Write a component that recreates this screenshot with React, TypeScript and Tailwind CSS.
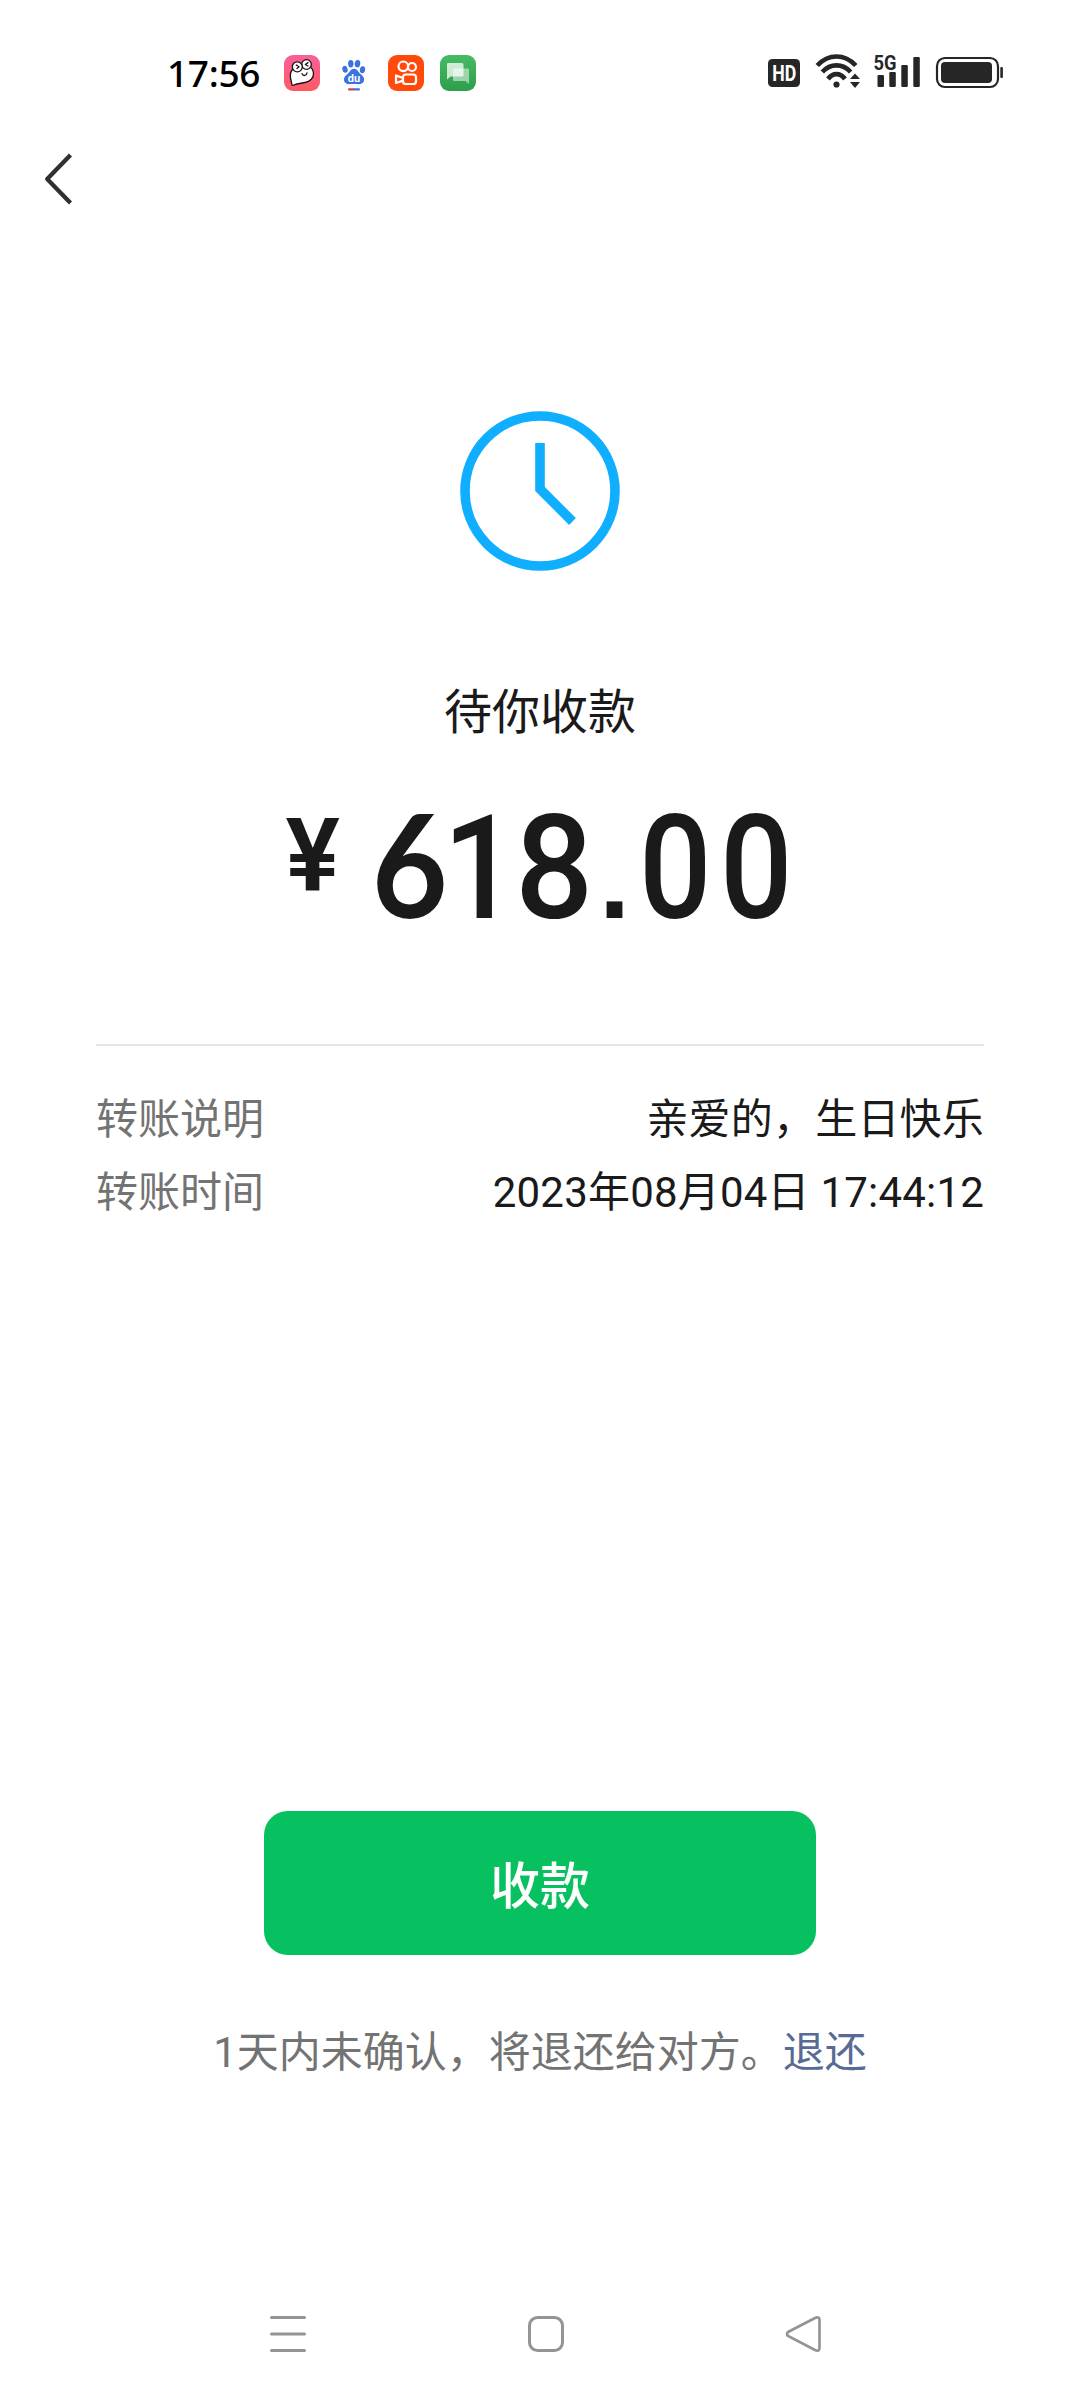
import { ReactNode } from "react";

interface IDetail {
  label: string;
  value: string;
}

const details: IDetail[] = [
  { label: "转账说明", value: "亲爱的，生日快乐" },
  { label: "转账时间", value: "2023年08月04日 17:44:12" },
];

function AppIcons() {
  return (
    <div className="flex gap-4">
      <svg width="36" height="36" viewBox="0 0 36 36">
        <defs>
          <linearGradient id="pink" x1="0" y1="0" x2="0" y2="1">
            <stop offset="0" stopColor="#f8609c" />
            <stop offset="1" stopColor="#ff5a62" />
          </linearGradient>
        </defs>
        <rect width="36" height="36" rx="9" fill="url(#pink)" />
        <g fill="#fff" stroke="#1c1116" strokeWidth="1.3" strokeLinejoin="round">
          <path d="M9 14 C6 17 6 20 6.500 23 L8 30 C9 31 11 29.500 13 29 L21 27.500 C26 26.500 30 23 29.500 18 C29 15 28 13 26 12 L18 12 Z" />
          <circle cx="22.500" cy="9.500" r="4.800" />
          <circle cx="13.300" cy="11.800" r="5" />
        </g>
        <g fill="none" stroke="#1c1116" strokeWidth="1.3" strokeLinecap="round" strokeLinejoin="round">
          <path d="M12.300 10 L15 11.700 L13 13.500 M24 7.600 L21.300 9.500 L24 11" />
          <path d="M18 18.600 C19 21.400 22.500 21 23 17.800" />
        </g>
      </svg>
      <svg width="36" height="36" viewBox="0 0 36 36">
        <g fill="#3a72e0">
          <ellipse cx="9" cy="14.300" rx="2.600" ry="3.500" transform="rotate(-14 9 14.300)" />
          <ellipse cx="14.800" cy="8.700" rx="2.700" ry="3.700" />
          <ellipse cx="21.500" cy="8.700" rx="2.700" ry="3.700" transform="rotate(10 21.500 8.700)" />
          <ellipse cx="26.500" cy="14.800" rx="2.600" ry="3.500" transform="rotate(10 26.500 14.800)" />
          <path d="M18 13.800 C21 13.800 22.300 17 24.500 19 C27 21 28.500 23 28 25.500 C27.300 29 24 29.500 20.500 29 H15.500 C12 29.500 8.700 29 8 25.500 C7.500 23 9 21 11.500 19 C13.800 17 15 13.800 18 13.800 Z" />
        </g>
        <text x="18" y="26.800" textAnchor="middle" fill="#fff" className="font-[Roboto] text-[11px] font-bold">du</text>
        <rect x="12" y="33.300" width="6.500" height="2.200" rx="1" fill="#e03d3a" />
        <rect x="17.500" y="33.300" width="6.500" height="2.200" rx="1" fill="#3a72e0" />
      </svg>
      <svg width="36" height="36" viewBox="0 0 36 36">
        <rect width="36" height="36" rx="9" fill="#ff4a0c" />
        <g fill="none" stroke="#fff" strokeWidth="2.200" strokeLinejoin="round">
          <circle cx="15.300" cy="11.300" r="4.800" />
          <circle cx="24" cy="12" r="4" />
          <rect x="15" y="19.500" width="13" height="9.500" rx="2.800" />
          <path d="M15 23 L8 20.500 V28 L15 25.600" />
        </g>
      </svg>
      <svg width="36" height="36" viewBox="0 0 36 36">
        <defs>
          <linearGradient id="green" x1="0" y1="0" x2="0" y2="1">
            <stop offset="0" stopColor="#47ba65" />
            <stop offset="1" stopColor="#2d9f4c" />
          </linearGradient>
        </defs>
        <rect width="36" height="36" rx="9" fill="url(#green)" />
        <path d="M14 13.500 H28 Q29 13.500 29 14.500 V29 L25.500 26 H14 Q13 26 13 25 V14.500 Q13 13.500 14 13.500 Z" fill="#fff" opacity=".5" />
        <path d="M8 8 H22 Q23.500 8 23.500 9.500 V20 Q23.500 21.500 22 21.500 H10.500 L7 24.500 V9 Q7 8 8 8 Z" fill="#fff" opacity=".75" />
      </svg>
    </div>
  );
}

function SystemIcons() {
  return (
    <svg width="236" height="52" viewBox="768 44 236 52" fill="#262626">
      <rect x="768" y="59" width="32" height="28" rx="4.500" />
      <text x="784.200" y="80.900" textAnchor="middle" textLength="24" lengthAdjust="spacingAndGlyphs" fill="#fff" className="font-[Roboto] text-[22.500px] font-bold">HD</text>
      <g fill="none" stroke="#262626" strokeWidth="4.700">
        <path d="M817.200 65.500 C828.500 53.500 844.500 53.500 855.800 65.500" />
        <path d="M822.300 72 C830.500 63.200 842.500 63.200 850.700 72" />
        <path d="M828 79 C832.800 72.600 840.200 72.600 845 79" />
      </g>
      <circle cx="836.500" cy="84.500" r="3.100" />
      <path d="M850 79 L855 73.500 L860 79 Z M850 82 H860 L855 88 Z" />
      <text x="873.500" y="70" textLength="23" lengthAdjust="spacingAndGlyphs" className="font-[Roboto] text-[21px] font-bold">5G</text>
      <rect x="877.500" y="75" width="6.500" height="12" rx="1.200" />
      <rect x="889.300" y="72" width="6.500" height="15" rx="1.200" />
      <rect x="901.300" y="65" width="6.500" height="22" rx="1.200" />
      <rect x="913.300" y="57" width="6.500" height="30" rx="1.200" />
      <rect x="937" y="58" width="61" height="29" rx="8" fill="none" stroke="#262626" strokeWidth="2.200" />
      <rect x="941" y="62" width="51" height="21" rx="4" />
      <rect x="1000.300" y="67" width="2.600" height="11" rx="1" />
    </svg>
  );
}

// each digit sits in its own box, the amount is not evenly spaced
function Digit({ children, box, glyph }: { children: ReactNode; box: string; glyph: string }) {
  return (
    <span className={`flex justify-center ${box}`}>
      <span className={glyph}>{children}</span>
    </span>
  );
}

export default function App() {
  return (
    <main className="flex h-[2400px] w-[1080px] flex-col overflow-hidden bg-white font-[Roboto,'Noto_Sans_CJK_SC',sans-serif] text-[#1a1a1a]">
      <header className="flex h-[145px] items-start justify-between pt-11 pr-[76px] pl-[167px]">
        <div className="flex items-center pt-[11px]">
          <span className="w-[117px] font-['Noto_Sans'] text-[37px] leading-9 font-medium tracking-[-0.3px] whitespace-nowrap text-black">17:56</span>
          <AppIcons />
        </div>
        <SystemIcons />
      </header>
      <nav className="h-[265px] pl-10">
        <svg width="40" height="68" viewBox="40 145 40 68" fill="none" stroke="#303030" strokeWidth="4.300" strokeLinejoin="round">
          <path d="M70.500 155 L47.200 179 L70.500 203" />
        </svg>
      </nav>
      <section className="flex flex-col items-center">
        <svg width="162" height="162" viewBox="459 410 162 162" fill="none" stroke="#10aeff" strokeWidth="9.600">
          <circle cx="540" cy="491" r="75" />
          <path d="M540 443 V489 L572.500 521.500" />
        </svg>
        <h1 className="mt-[105px] text-[48px] leading-[72px]">待你收款</h1>
        <div className="mt-[42px] flex h-[163px] items-start leading-none font-medium">
          <span className="w-[84px] pt-[14px] text-[102px] font-semibold">¥</span>
          <div className="flex items-baseline text-[145px]">
            <Digit box="w-[80px]" glyph="scale-x-91 font-[Lato] text-[144px] font-bold">6</Digit>
            <Digit box="w-[62px]" glyph="scale-x-90">1</Digit>
            <Digit box="w-[85px]" glyph="scale-x-95">8</Digit>
            <Digit box="w-[36px]" glyph="font-['Liberation_Sans'] text-[112px] font-bold">.</Digit>
            <Digit box="w-[85px]" glyph="scale-x-88">0</Digit>
            <Digit box="w-[77px]" glyph="scale-x-88">0</Digit>
          </div>
        </div>
      </section>
      <section className="mx-24 mt-[90px] border-t-2 border-[#e5e5e5] pt-[37px] text-[42px] leading-[73px]">
        {details.map((item) => (
          <div key={item.label} className="flex justify-between">
            <span className="text-[#737373]">{item.label}</span>
            <span className="tracking-[0.2px]">{item.value}</span>
          </div>
        ))}
      </section>
      <footer className="mt-auto flex flex-col items-center">
        <button className="h-36 w-[552px] rounded-3xl bg-[#07c160] pt-[9px] text-[50px] font-medium text-white">收款</button>
        <p className="mt-[66px] text-[42px] leading-[64px] text-[#737373]">
          1天内未确认，将退还给对方。<a className="text-[#576b95]">退还</a>
        </p>
        <div className="mt-[229px] mb-[46px] flex w-full items-center justify-between pr-[257px] pl-[269px] text-[#949494]">
          <svg width="38" height="40" viewBox="0 0 38 40" stroke="currentColor" strokeWidth="3" strokeLinecap="round">
            <path d="M2.500 3.500 H35.500 M2.500 20 H35.500 M2.500 36.500 H35.500" />
          </svg>
          <svg width="38" height="40" viewBox="0 0 38 40" fill="none" stroke="currentColor" strokeWidth="3">
            <rect x="2.500" y="3.500" width="33" height="33" rx="8" />
          </svg>
          <svg width="38" height="40" viewBox="0 0 38 40" fill="none" stroke="currentColor" strokeWidth="2.700">
            <path d="M3 18 L30 4 Q34.500 2 34.500 6 V34 Q34.500 38 30 36 L3 22 Q1 20 3 18 Z" />
          </svg>
        </div>
      </footer>
    </main>
  );
}
